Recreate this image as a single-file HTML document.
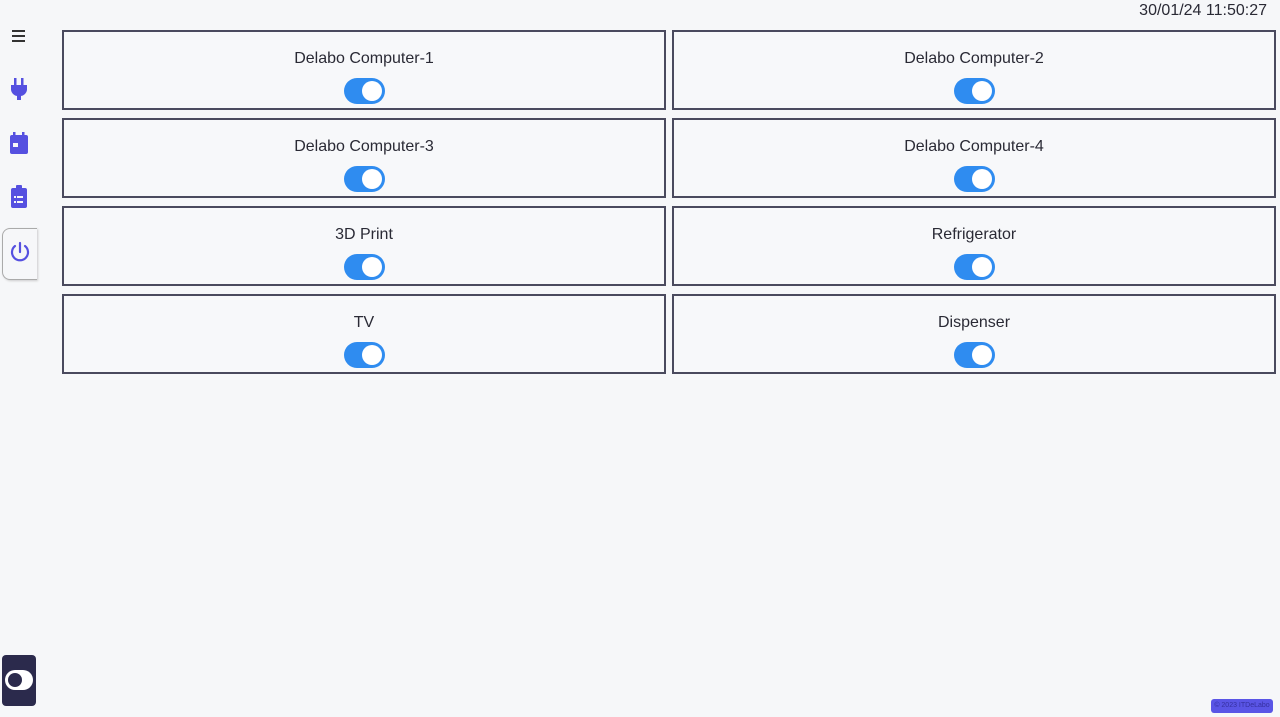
<!DOCTYPE html>
<html><head><style>
body{margin:0;width:1280px;height:717px;background:#f6f7f9;font-family:"Liberation Sans",sans-serif;position:relative;overflow:hidden;color:#2a2a35}
.card{position:absolute;width:600px;height:76px;border:2px solid #4a4a5e;background:#f7f8fa}
.card .t{position:absolute;top:18px;left:0;right:0;text-align:center;font-size:16px}
.tg{position:absolute;left:50%;margin-left:-20px;top:46px;width:41px;height:26px;border-radius:13px;background:#2f8cf0}
.tg:after{content:"";position:absolute;right:3px;top:3px;width:20px;height:20px;border-radius:50%;background:#fff}
.ic{position:absolute}
</style></head><body>
<div style="position:absolute;right:13px;top:2px;font-size:16px">30/01/24 11:50:27</div>
<svg class="ic" style="left:12px;top:29px" width="14" height="14"><rect x="0" y="1" width="13" height="2" fill="#333"/><rect x="0" y="6" width="13" height="2" fill="#333"/><rect x="0" y="11" width="13" height="2" fill="#333"/></svg>
<svg class="ic" style="left:10px;top:78px" width="18" height="24" fill="#5550e0"><rect x="4" y="0" width="2.5" height="7"/><rect x="11" y="0" width="2.5" height="7"/><path d="M1 7h16v5a7 7 0 0 1-6 6v4h-4v-4a7 7 0 0 1-6-6z"/></svg>
<svg class="ic" style="left:10px;top:131px" width="18" height="24" fill="#5550e0"><rect x="3" y="1" width="2.5" height="4"/><rect x="12" y="1" width="2.5" height="4"/><rect x="0" y="4" width="18" height="19" rx="2"/><rect x="3" y="12" width="5" height="4" fill="#f6f7f9"/></svg>
<svg class="ic" style="left:10px;top:185px" width="18" height="24" fill="#5550e0"><rect x="6" y="0" width="6" height="4" rx="1"/><rect x="1" y="3" width="16" height="20" rx="2"/><g fill="#f6f7f9"><rect x="4" y="11" width="2" height="2"/><rect x="7" y="11" width="6" height="2"/><rect x="4" y="16" width="2" height="2"/><rect x="7" y="16" width="6" height="2"/></g></svg>
<div style="position:absolute;left:2px;top:228px;width:34px;height:50px;border:1px solid #aaa;border-right:none;border-radius:8px 0 0 8px;box-shadow:1px 1px 2px #ccc"></div>
<svg class="ic" style="left:9px;top:241px" width="22" height="22" fill="none" stroke="#5550e0" stroke-width="2.2" stroke-linecap="round"><path d="M11 2v9"/><path d="M6 5a8 8 0 1 0 10 0"/></svg>
<div style="position:absolute;left:2px;top:655px;width:34px;height:51px;background:#2b2a4c;border-radius:4px"></div>
<div style="position:absolute;left:5px;top:670px;width:28px;height:20px;border-radius:10px;background:#fff"></div>
<div style="position:absolute;left:8px;top:673px;width:14px;height:14px;border-radius:50%;background:#2b2a4c"></div>
<div style="position:absolute;left:1211px;top:699px;width:62px;height:14px;background:#5a55e6;border-radius:3px;font-size:7px;color:#3530a0;text-align:center;line-height:14px">© 2023 ITDeLabo</div>

<div class="card" style="left:62px;top:30px"><div class="t">Delabo Computer-1</div><div class="tg"></div></div>
<div class="card" style="left:672px;top:30px"><div class="t">Delabo Computer-2</div><div class="tg"></div></div>
<div class="card" style="left:62px;top:118px"><div class="t">Delabo Computer-3</div><div class="tg"></div></div>
<div class="card" style="left:672px;top:118px"><div class="t">Delabo Computer-4</div><div class="tg"></div></div>
<div class="card" style="left:62px;top:206px"><div class="t">3D Print</div><div class="tg"></div></div>
<div class="card" style="left:672px;top:206px"><div class="t">Refrigerator</div><div class="tg"></div></div>
<div class="card" style="left:62px;top:294px"><div class="t">TV</div><div class="tg"></div></div>
<div class="card" style="left:672px;top:294px"><div class="t">Dispenser</div><div class="tg"></div></div>
</body></html>
